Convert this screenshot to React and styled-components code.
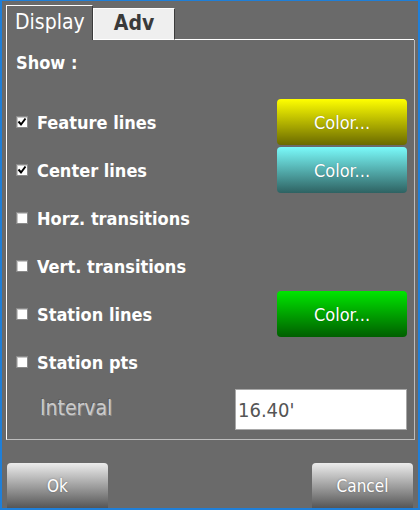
import styled, { createGlobalStyle } from "styled-components";

const GlobalStyle = createGlobalStyle`
  html, body {
    margin: 0;
    padding: 0;
    background: #6a6a6a;
  }
  * {
    box-sizing: border-box;
  }
`;

const Window = styled.div`
  width: 420px;
  height: 510px;
  background: #6a6a6a;
  border-style: solid;
  border-color: #1f7fd8;
  border-width: 1px 2px 2px 2px;
  padding: 4px 3px 0 4px;
  display: flex;
  flex-direction: column;
  font-family: "DejaVu Sans Condensed", "DejaVu Sans", sans-serif;
`;

const TabBar = styled.div`
  display: flex;
  align-items: flex-end;
  height: 35px;
`;

const Tab = styled.div`
  height: ${({ active }) => (active ? "35px" : "32px")};
  width: ${({ width }) => width}px;
  background: ${({ active }) => (active ? "#6a6a6a" : "#efefef")};
  border-top: 1px solid #ffffff;
  border-left: 1px solid #ffffff;
  border-right: 1px solid #3c3c3c;
  border-bottom: ${({ active }) => (active ? "none" : "1px solid #ffffff")};
  color: ${({ active }) => (active ? "#ffffff" : "#3a3a3a")};
  font-size: 21px;
  font-weight: ${({ active }) => (active ? "normal" : "bold")};
  display: flex;
  align-items: center;
  justify-content: ${({ active }) => (active ? "flex-start" : "center")};
  padding-left: ${({ active }) => (active ? "8px" : "0")};
  padding-bottom: 2px;
`;

const TabFill = styled.div`
  flex: 1;
  border-bottom: 1px solid #ffffff;
  border-right: 1px solid #ffffff;
  height: 1px;
  margin-right: 1px;
`;

const Panel = styled.div`
  height: 400px;
  width: 409px;
  border-left: 1px solid #ffffff;
  border-right: 1px solid #bdbdbd;
  border-bottom: 1px solid #bdbdbd;
  padding: 10px 7px 0 9px;
  display: flex;
  flex-direction: column;
`;

const Heading = styled.div`
  height: 24px;
  margin-bottom: 24px;
  color: #ffffff;
  font-size: 18px;
  font-weight: bold;
  display: flex;
  align-items: center;
`;

const Row = styled.div`
  height: ${({ tall }) => (tall ? "44px" : "48px")};
  display: flex;
  align-items: center;
  justify-content: space-between;
`;

const CheckLabel = styled.label`
  display: flex;
  align-items: center;
  gap: 9px;
  color: #ffffff;
  font-size: 18px;
  font-weight: bold;
`;

const Box = styled.span`
  width: 12px;
  height: 12px;
  background: #ffffff;
  border: 1px solid #8a8a8a;
  box-shadow: inset 1px 1px 0 #c8c8c8;
  display: flex;
  align-items: center;
  justify-content: center;
`;

const ColorButton = styled.button`
  width: 130px;
  height: 46px;
  border: none;
  border-radius: 4px;
  background: linear-gradient(${({ top }) => top}, ${({ bottom }) => bottom});
  color: #ffffff;
  font-family: inherit;
  font-size: 18px;
  padding: 0;
  text-shadow: 0 0 1px rgba(0, 0, 0, 0.3);
`;

const FieldLabel = styled.span`
  margin-left: 24px;
  color: #cacaca;
  font-size: 21px;
  text-shadow: 1px 1px 0 rgba(255, 255, 255, 0.25), -1px -1px 0 rgba(0, 0, 0, 0.15);
`;

const Field = styled.div`
  width: 172px;
  height: 41px;
  background: #ffffff;
  border: 1px solid #a8a8a8;
  color: #555555;
  font-size: 20px;
  display: flex;
  align-items: center;
  padding-left: 2px;
  margin-top: 3px;
`;

const Footer = styled.div`
  flex: 1;
  display: flex;
  align-items: flex-end;
  justify-content: space-between;
  padding: 0 2px 0 1px;
`;

const DialogButton = styled.button`
  width: 101px;
  height: 45px;
  border: none;
  border-radius: 4px 4px 0 0;
  background: linear-gradient(#ececec, #9a9a9a 55%, #565656);
  color: #ffffff;
  font-family: inherit;
  font-size: 17px;
  padding: 0;
  text-shadow: 0 0 2px rgba(0, 0, 0, 0.35);
`;

const Check = () => (
  <svg width="10" height="10" viewBox="0 0 10 10">
    <path d="M1.5 4.5 L4 7.5 L8.5 1.5" fill="none" stroke="#000" strokeWidth="2" />
  </svg>
);

const options = [
  { label: "Feature lines", checked: true, color: ["#ffff00", "#6a6a00"] },
  { label: "Center lines", checked: true, color: ["#7afafa", "#2e6262"] },
  { label: "Horz. transitions", checked: false },
  { label: "Vert. transitions", checked: false },
  { label: "Station lines", checked: false, color: ["#00e600", "#005e00"] },
  { label: "Station pts", checked: false },
];

export default function App() {
  return (
    <>
      <GlobalStyle />
      <Window>
        <TabBar>
          <Tab active width={87}>Display</Tab>
          <Tab width={82}>Adv</Tab>
          <TabFill />
        </TabBar>
        <Panel>
          <Heading>Show :</Heading>
          {options.map((opt) => (
            <Row key={opt.label}>
              <CheckLabel>
                <Box>{opt.checked && <Check />}</Box>
                {opt.label}
              </CheckLabel>
              {opt.color && (
                <ColorButton top={opt.color[0]} bottom={opt.color[1]}>
                  Color...
                </ColorButton>
              )}
            </Row>
          ))}
          <Row tall>
            <FieldLabel>Interval</FieldLabel>
            <Field>16.40'</Field>
          </Row>
        </Panel>
        <Footer>
          <DialogButton>Ok</DialogButton>
          <DialogButton>Cancel</DialogButton>
        </Footer>
      </Window>
    </>
  );
}
